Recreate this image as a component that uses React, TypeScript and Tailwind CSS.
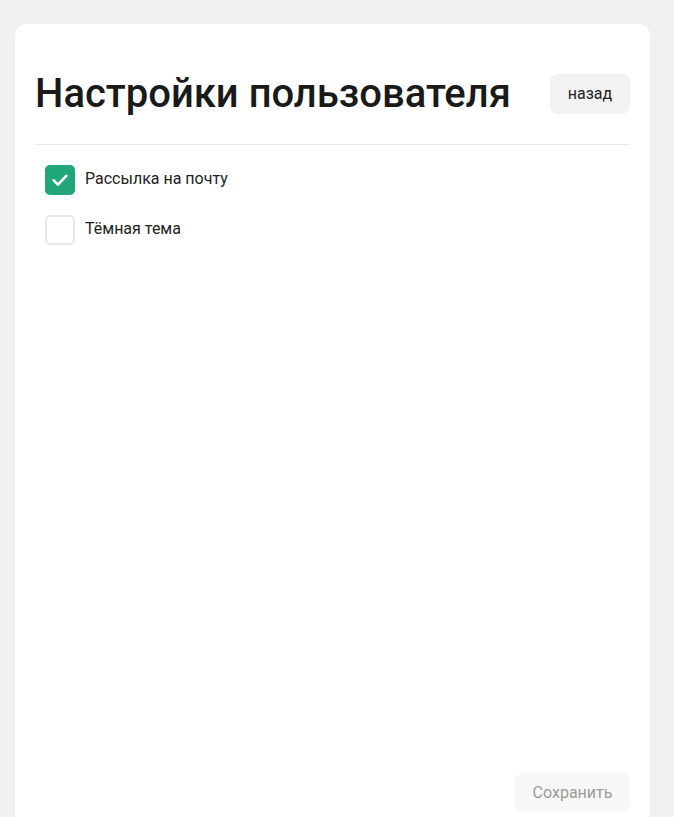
import { useState } from 'react';

function Checkbox({ checked, onChange, label }: { checked: boolean; onChange: () => void; label: string }) {
  return (
    <label className="flex items-center gap-[10px] cursor-pointer select-none" onClick={onChange}>
      <span
        className={`flex h-[30px] w-[30px] items-center justify-center rounded-[5px] border-2 ${
          checked ? 'border-[#21a67a] bg-[#21a67a]' : 'border-[#e8e8e8] bg-white'
        }`}
      >
        {checked && (
          <svg width="20" height="20" viewBox="0 0 24 24" fill="none" stroke="white" strokeWidth="3.2" strokeLinecap="round" strokeLinejoin="round">
            <path d="M4.5 12.5l5 5L19.5 7" />
          </svg>
        )}
      </span>
      <span className="-mt-[2px] text-[16px] text-[#222]">{label}</span>
    </label>
  );
}

export default function App() {
  const [mail, setMail] = useState(true);
  const [dark, setDark] = useState(false);

  return (
    <div className="min-h-screen bg-[#f1f1f1] pl-[15px] pt-[24px]" style={{ fontFamily: 'Roboto, "Noto Sans", sans-serif' }}>
      <div className="flex h-[793px] w-[635px] flex-col rounded-t-[12px] bg-white px-[20px] pb-[5px]">
        <div className="flex items-center justify-between pt-[50px] pb-[30px]">
          <h1 className="text-[40px] leading-[40px] font-medium text-[#1a1a1a]">Настройки пользователя</h1>
          <button className="h-[40px] w-[80px] rounded-[8px] bg-[#f2f2f2] text-[16px] text-[#222]">назад</button>
        </div>
        <div className="border-t border-[#e9e9e9]" />
        <div className="flex flex-col gap-[20px] px-[10px] pt-[20px]">
          <Checkbox checked={mail} onChange={() => setMail(!mail)} label="Рассылка на почту" />
          <Checkbox checked={dark} onChange={() => setDark(!dark)} label="Тёмная тема" />
        </div>
        <div className="mt-auto flex justify-end">
          <button className="h-[39px] w-[115px] rounded-[8px] bg-[#f7f7f7] text-[16px] text-[#9a9a9a]">Сохранить</button>
        </div>
      </div>
    </div>
  );
}
